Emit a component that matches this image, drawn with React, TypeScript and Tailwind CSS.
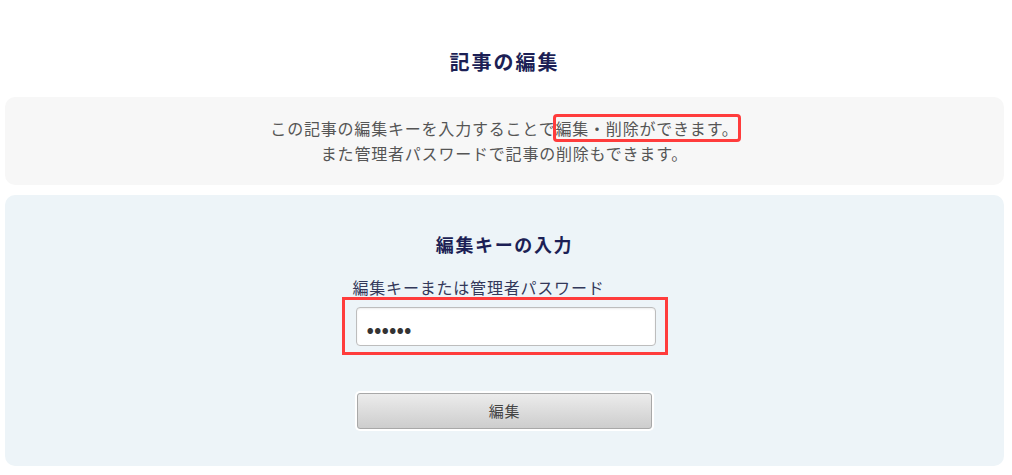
import React from 'react'

export default function App() {
  return (
    <div className="h-[475px] w-full overflow-hidden bg-white font-['Noto_Sans_CJK_JP','Noto_Sans',sans-serif] tracking-[0.05em]">
      <div className="ml-[5px] mr-[8px]">
        {/* page title */}
        <h1 className="pt-[48px] text-center text-[20px] font-bold leading-[28px] tracking-[0.1em] text-[#1c1f55]">記事の編集</h1>

        {/* note */}
        <div className="mt-[21px] rounded-[10px] bg-[#f7f7f7] py-[19px] text-center text-[16px] leading-[25px] text-[#555]">
          <p>
            この記事の編集キーを入力することで
            <span className="rounded-[2px] outline-[3px] outline-offset-[-1px] outline-[#ff3c3c] outline-solid">編集・削除ができます。</span>
          </p>
          <p>また管理者パスワードで記事の削除もできます。</p>
        </div>

        {/* key form */}
        <div className="mt-[10px] rounded-[10px] bg-[#edf4f8] pt-[36px] pb-[37px]">
          <h2 className="text-center text-[18px] font-bold leading-[26px] tracking-[0.09em] text-[#1c1f55]">編集キーの入力</h2>
          <div className="mx-auto mt-[20px] w-[304px] text-[16px] leading-[20px] text-[#33385a]">編集キーまたは管理者パスワード</div>
          <div className="mx-auto w-[326px] border-[3px] border-[#ff3c3c] pt-[7px] pr-[9px] pb-[6px] pl-[11px]">
            <input
              type="password"
              defaultValue="123456"
              readOnly
              className="block h-[39px] w-[300px] rounded-[4px] border border-[#bdbdbd] bg-white px-[10px] text-[22px] tracking-[0px] text-[#333] shadow-[inset_0_1px_2px_rgba(0,0,0,0.08)] outline-none"
            />
          </div>
          <div className="mt-[38px] flex justify-center">
            <button className="h-[36px] w-[295px] rounded-[3px] border border-[#a8a8a8] bg-gradient-to-b from-[#ececec] to-[#cdcdcd] text-[15px] text-[#444] ring-2 ring-white">
              編集
            </button>
          </div>
        </div>
      </div>
    </div>
  )
}
